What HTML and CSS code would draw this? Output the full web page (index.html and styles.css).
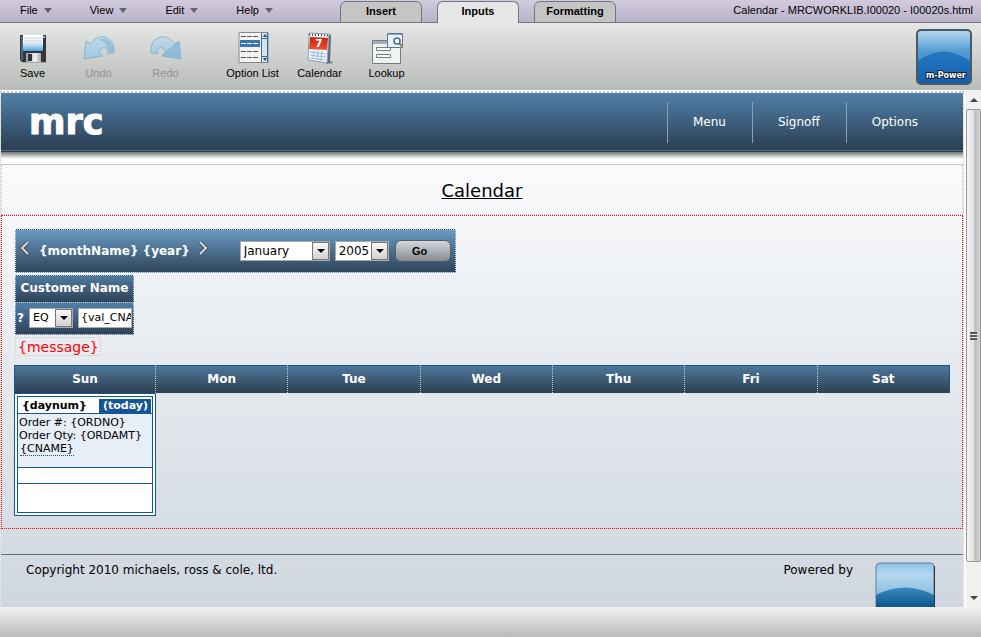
FILE: index.html
```html
<!DOCTYPE html>
<html lang="en">
<head>
    <meta charset="UTF-8">
    <meta name="viewport" content="width=device-width, initial-scale=1.0">
    <title>Calendar - MRCWORKLIB.I00020 - I00020s.html</title>
    <link rel="stylesheet" href="styles.css">
</head>
<body>
    <!-- Menu bar with tabs -->
    <header class="menubar">
        <nav class="menus">
            <button type="button" class="menu">File</button>
            <button type="button" class="menu">View</button>
            <button type="button" class="menu">Edit</button>
            <button type="button" class="menu">Help</button>
        </nav>
        <div class="tabs">
            <button type="button" class="tab">Insert</button>
            <button type="button" class="tab active">Inputs</button>
            <button type="button" class="tab">Formatting</button>
        </div>
        <span class="file-name">Calendar - MRCWORKLIB.I00020 - I00020s.html</span>
    </header>

    <!-- Toolbar -->
    <div class="toolbar">
        <div class="tools">
            <button type="button" class="tool save">
                <svg width="32" height="32" viewBox="0 0 32 32">
                    <defs>
                        <linearGradient id="disk" x1="0" y1="0" x2="0" y2="1"><stop offset="0" stop-color="#fff"/><stop offset=".5" stop-color="#e8f4fd"/><stop offset="1" stop-color="#4aa3e0"/></linearGradient>
                        <linearGradient id="metal" x1="0" y1="0" x2="1" y2="0"><stop offset="0" stop-color="#999"/><stop offset=".6" stop-color="#f4f4f4"/><stop offset="1" stop-color="#aaa"/></linearGradient>
                    </defs>
                    <path d="M5 30h25v1H5z" fill="#888" opacity=".5"/>
                    <path d="M3 3h26v27H5l-2-2z" fill="#34363f"/>
                    <path d="M4 4h2v24H4z" fill="#5c6070"/>
                    <path d="M6 3h20v16H6z" fill="url(#disk)"/>
                    <path d="M7 6h18M7 9h18M7 12h18" stroke="#c5d3df"/>
                    <path d="M9 21h15v9H9z" fill="url(#metal)"/>
                    <path d="M11 22h4v7h-4z" fill="#30323a"/>
                    <path d="M26 4h2v2h-2z" fill="#aab"/>
                </svg>
                <span>Save</span>
            </button>
            <button type="button" class="tool" disabled>
                <svg width="34" height="32" viewBox="0 0 34 32">
                    <defs><linearGradient id="arrow" x1="0" y1="0" x2="0" y2="1"><stop offset="0" stop-color="#c3dae7"/><stop offset="1" stop-color="#9cc8e4"/></linearGradient></defs>
                    <path d="M2 27L4 9l4 3C12 7 17 4 22 5c7 1 11 8 10 16l-6 1c0-8-5-8-9-3l4 5z" fill="url(#arrow)" stroke="#8fb4ca"/>
                    <path d="M15 8c7 0 11 5 12 13l5-1c0-9-7-16-17-12z" fill="#7eb2d4" opacity=".6"/>
                </svg>
                <span>Undo</span>
            </button>
            <button type="button" class="tool" disabled>
                <svg width="34" height="32" viewBox="0 0 34 32">
                    <g transform="matrix(-1 0 0 1 34 0)">
                        <path d="M2 27L4 9l4 3C12 7 17 4 22 5c7 1 11 8 10 16l-6 1c0-8-5-8-9-3l4 5z" fill="url(#arrow)" stroke="#8fb4ca"/>
                        <path d="M2 27L4 9l4 3c4 4 6 4 9 7l4 5z" fill="#7eb2d4" opacity=".6"/>
                    </g>
                </svg>
                <span>Redo</span>
            </button>
        </div>
        <div class="tools">
            <button type="button" class="tool">
                <svg width="32" height="32" viewBox="0 0 32 32">
                    <path d="M2 .5h29v30H2z" fill="#f4f4f2" stroke="#85888a"/>
                    <path d="M3 8h20v7H3z" fill="#3b76b0"/>
                    <path d="M4 4.500h18M4 19.500h18M4 25.500h18" stroke="#555" stroke-dasharray="5 1"/>
                    <path d="M4 11.500h18" stroke="#fff" stroke-dasharray="5 1"/>
                    <path d="M24.500 1v29" stroke="#496b8c"/>
                    <path d="M25 1h6v29h-6z" fill="#d3e4f1"/>
                    <path d="M25 6.500h6M25 24.500h6M30.500 1v29" stroke="#3f6890"/>
                    <path d="M28 2l2 3h-4zM28 29l2-3h-4z" fill="#244b72"/>
                </svg>
                <span>Option List</span>
            </button>
            <button type="button" class="tool">
                <svg width="32" height="32" viewBox="0 0 32 32">
                    <defs><linearGradient id="red" x1="0" y1="0" x2="0" y2="1"><stop offset="0" stop-color="#c9210c"/><stop offset="1" stop-color="#ee5330"/></linearGradient></defs>
                    <path d="M9 29l19 3 1-3z" fill="#777" opacity=".6"/>
                    <path d="M24 2l3 1-1 28-4 1z" fill="#566b80"/>
                    <path d="M5 1l20 1-2 29-19-3z" fill="#eef4fa" stroke="#90a0af"/>
                    <path d="M6 5l18 1-1 12L5 17z" fill="url(#red)"/>
                    <path d="M6 20l16 2M6 23l16 2M6 26l15 2M10 18l-1 9M14 18l-1 10M18 19l-1 10" stroke="#9bbad8"/>
                    <path d="M5 2.500l20 1" stroke="#444" stroke-width="2" stroke-dasharray="1 2"/>
                    <text x="11" y="15" class="day">7</text>
                </svg>
                <span>Calendar</span>
            </button>
            <button type="button" class="tool">
                <svg width="32" height="32" viewBox="0 0 32 32">
                    <path d="M1.500 8.500h28v23h-28z" fill="#f1f2f2" stroke="#747d83"/>
                    <path d="M2 9h27v3H2z" fill="#9fb0bc"/>
                    <path d="M5.500 15.500h14v3h-14zM5.500 22.500h14v3h-14z" fill="#fff" stroke="#747d83"/>
                    <path d="M16.500 1.500h15v14h-15z" fill="#e8f1f7" stroke="#5d7c90"/>
                    <path d="M17 2h14v1H17z" fill="#8ba7ba"/>
                    <path d="M29 2h2v1h-2z" fill="#e55"/>
                    <path d="M28 11l4 4" stroke="#a2744d" stroke-width="2"/>
                    <circle cx="26" cy="9" r="3" fill="#fff" stroke="#446f91" stroke-width="1.500"/>
                </svg>
                <span>Lookup</span>
            </button>
        </div>
        <svg class="mpower" width="57" height="57" viewBox="0 0 57 57">
            <defs>
                <linearGradient id="glass" x1="0" y1="0" x2="0" y2="1"><stop offset="0" stop-color="#b9daf2"/><stop offset=".4" stop-color="#529bd3"/><stop offset="1" stop-color="#2878c2"/></linearGradient>
                <linearGradient id="hill" x1="0" y1="0" x2="0" y2="1"><stop offset="0" stop-color="#2378c0"/><stop offset="1" stop-color="#155fb0"/></linearGradient>
            </defs>
            <rect x="2" y="1" width="54" height="54" rx="4" fill="url(#glass)" stroke="#4c5862" stroke-width="2"/>
            <path d="M3 32Q28 13 55 32V51q0 3-3 3H6q-3 0-3-3z" fill="url(#hill)"/>
            <text x="11" y="49" class="mpower-text">m-Power</text>
        </svg>
    </div>

    <!-- Page being edited -->
    <main class="workspace">
        <div class="page">
            <div class="banner">
                <h1 class="logo">mrc</h1>
                <nav class="links">
                    <a href="#">Menu</a>
                    <a href="#">Signoff</a>
                    <a href="#">Options</a>
                </nav>
            </div>
            <div class="banner-shadow"></div>
            <div class="content">
                <h2 class="title">Calendar</h2>
                <section class="region">
                    <form class="month-bar">
                        <button type="button" class="step" aria-label="Previous month">
                            <svg width="10" height="16" viewBox="0 0 10 16"><path d="M8 2L2 8l6 6" fill="none" stroke="#444e58" stroke-width="4"/><path d="M8 2L2 8l6 6" fill="none" stroke="#d9dbdd" stroke-width="2"/></svg>
                        </button>
                        <strong class="month-name">{monthName} {year}</strong>
                        <button type="button" class="step" aria-label="Next month">
                            <svg width="10" height="16" viewBox="0 0 10 16"><path d="M2 2l6 6-6 6" fill="none" stroke="#444e58" stroke-width="4"/><path d="M2 2l6 6-6 6" fill="none" stroke="#d9dbdd" stroke-width="2"/></svg>
                        </button>
                        <span class="drop month">
                            <select aria-label="Month"><option>January</option></select>
                            <i class="drop-arrow"></i>
                        </span>
                        <span class="drop year">
                            <select aria-label="Year"><option>2005</option></select>
                            <i class="drop-arrow"></i>
                        </span>
                        <button type="button" class="go">Go</button>
                    </form>
                    <form class="filter">
                        <label class="filter-name" for="cname">Customer Name</label>
                        <div class="filter-row">
                            <b>?</b>
                            <span class="drop operator">
                                <select aria-label="Operator"><option>EQ</option></select>
                                <i class="drop-arrow"></i>
                            </span>
                            <input type="text" id="cname" class="value" value="{val_CNAME}">
                        </div>
                    </form>
                    <div class="message">{message}</div>
                    <table class="calendar">
                        <thead>
                            <tr><th class="first">Sun</th><th>Mon</th><th>Tue</th><th>Wed</th><th>Thu</th><th>Fri</th><th>Sat</th></tr>
                        </thead>
                        <tbody>
                            <tr>
                                <td class="day-cell">
                                    <div class="day-box">
                                        <div class="day-head"><b>{daynum}</b><b class="today">(today)</b></div>
                                        <div class="order">
                                            Order #: {ORDNO}<br>
                                            Order Qty: {ORDAMT}<br>
                                            <a href="#">{CNAME}</a>
                                        </div>
                                        <div class="blank"></div>
                                        <div class="blank tall"></div>
                                    </div>
                                </td>
                                <td></td><td></td><td></td><td></td><td></td><td></td>
                            </tr>
                        </tbody>
                    </table>
                </section>
                <footer class="footer">
                    <span>Copyright 2010 michaels, ross &amp; cole, ltd.</span>
                    <span class="powered">Powered by</span>
                    <svg width="60" height="60" viewBox="0 0 60 60">
                        <defs>
                            <linearGradient id="sky" x1="0" y1="0" x2="0" y2="1"><stop offset="0" stop-color="#8bc3e6"/><stop offset=".2" stop-color="#b4d8ee"/><stop offset="1" stop-color="#5a9fce"/></linearGradient>
                            <linearGradient id="sea" x1="0" y1="0" x2="0" y2="1"><stop offset="0" stop-color="#3d8abc"/><stop offset=".6" stop-color="#06568f"/></linearGradient>
                        </defs>
                        <rect x="1" y="1" width="58" height="58" rx="4" fill="url(#sky)" stroke="#5a7f98"/>
                        <path d="M1 33Q30 18 59 33V59H1z" fill="url(#sea)"/>
                        <path d="M59.500 4v56" stroke="#333"/>
                    </svg>
                </footer>
            </div>
        </div>
        <div class="scrollbar">
            <button type="button" class="scroll-up" aria-label="Scroll up"></button>
            <div class="thumb"><i></i></div>
            <button type="button" class="scroll-down" aria-label="Scroll down"></button>
        </div>
    </main>
    <div class="statusbar"></div>
</body>
</html>
```

FILE: styles.css
```css
* {
    box-sizing: border-box;
}
body {
    margin: 0;
    height: 100vh;
    display: flex;
    flex-direction: column;
    overflow: hidden;
    font-family: Verdana, "DejaVu Sans", sans-serif;
    font-size: 12px;
    color: #000;
}
button {
    margin: 0;
    padding: 0;
    border: none;
    background: none;
    font-family: Arial, "Liberation Sans", sans-serif;
    font-size: 11px;
    color: #000;
}
svg {
    display: block;
}

/* Menu bar */
.menubar {
    display: flex;
    height: 23px;
    flex-shrink: 0;
    padding: 0 8px 0 20px;
    background: linear-gradient(#d2cbde, #b9b2c8);
    box-shadow: inset 0 -1px #77757c;
    font-family: Arial, "Liberation Sans", sans-serif;
    font-size: 11px;
}
.menus {
    display: flex;
    gap: 38px;
    height: 20px;
}
.menu {
    display: flex;
    align-items: center;
    gap: 6px;
}
.menu::after {
    content: "";
    border: 4px solid transparent;
    border-top: 5px solid #66636d;
    border-bottom: none;
}
.tabs {
    display: flex;
    gap: 15px;
    margin-left: 67px;
    padding-top: 1px;
}
.tab {
    width: 82px;
    padding-bottom: 3px;
    border: 1px solid #77757c;
    border-radius: 6px 6px 0 0;
    background: #c6c5c5;
    font-weight: bold;
}
.tab.active {
    border-bottom: none;
    background: #e5e7e6;
    padding-bottom: 4px;
}
.file-name {
    margin-left: auto;
    line-height: 20px;
}

/* Toolbar */
.toolbar {
    display: flex;
    height: 67px;
    flex-shrink: 0;
    gap: 20px;
    padding-right: 9px;
    background: linear-gradient(#e5e7e6, #b9bbb8);
}
.tools {
    display: flex;
}
.tool {
    display: flex;
    flex-direction: column;
    align-items: center;
    gap: 3px;
    width: 67px;
    padding-top: 9px;
    line-height: 13px;
    white-space: nowrap;
}
.tool.save {
    width: 65px;
}
.tool:disabled {
    color: #909390;
}
.day {
    font: bold 11px Verdana, "DejaVu Sans", sans-serif;
    fill: #fff;
}
.mpower {
    margin: 6px 0 0 auto;
}
.mpower-text {
    font: bold 8px Verdana, "DejaVu Sans", sans-serif;
    fill: #fff;
    stroke: #123;
    stroke-width: 2px;
    paint-order: stroke;
}

/* Workspace */
.workspace {
    display: flex;
    flex: 1;
    min-height: 0;
    overflow: hidden;
    background: #fff;
}
.page {
    display: flex;
    flex-direction: column;
    flex: 1;
    margin: 1px 2px 0 0;
    border: 1px dotted #c8c8c8;
    border-top-width: 2px;
    border-bottom: none;
    overflow: hidden;
}
.banner {
    display: flex;
    justify-content: space-between;
    align-items: center;
    height: 59px;
    flex-shrink: 0;
    padding: 0 19px 0 28px;
    border-bottom: 1px solid #253b4e;
    background: linear-gradient(#507fa8, #2a3e52);
    box-shadow: inset 0 -1px #587389;
}
.logo {
    margin: 0;
    font-size: 35px;
    line-height: 40px;
    color: #fff;
    -webkit-text-stroke: 1px #fff;
}
.links {
    display: flex;
}
.links a {
    padding: 0 26px 0 25px;
    border-left: 1px solid #8fa0af;
    line-height: 41px;
    color: #fff;
    text-decoration: none;
}
.banner-shadow {
    height: 12px;
    flex-shrink: 0;
    background: linear-gradient(#777, #fff 7px);
}
.content {
    flex: 1;
    border-top: 1px dotted #bbb;
    background: linear-gradient(#fafbfc, #cdd5de);
}
.title {
    margin: 0;
    height: 50px;
    border: 1px dotted #ccc;
    border-top: none;
    font-size: 18px;
    font-weight: normal;
    line-height: 51px;
    text-align: center;
    text-decoration: underline;
}
.region {
    padding: 13px 12px 12px;
    border: 1px dotted #f00;
}

/* Month selector */
.month-bar {
    display: flex;
    align-items: center;
    width: 441px;
    height: 44px;
    margin-left: 1px;
    padding: 0 4px;
    border: 1px dotted #d5e0ea;
    background: linear-gradient(#6a9bc6, #2e4458);
    color: #fff;
}
.step {
    padding-bottom: 6px;
}
.month-name {
    margin: 0 8px 0 9px;
}
.drop {
    position: relative;
    display: flex;
    height: 20px;
}
.drop select {
    appearance: none;
    width: 100%;
    padding: 0 3px;
    border: 1px solid #aaa;
    border-radius: 0;
    background: #fff;
    color: #000;
    font: 12px Verdana, "DejaVu Sans", sans-serif;
}
.drop-arrow {
    position: absolute;
    top: 1px;
    right: 1px;
    bottom: 1px;
    width: 17px;
    border: 1px solid #777;
    background: linear-gradient(#f7f7f7, #d2d2d2);
    pointer-events: none;
}
.drop-arrow::after {
    content: "";
    position: absolute;
    top: 6px;
    left: 4px;
    border: 4px solid transparent;
    border-top-color: #000;
    border-bottom: none;
}
.month {
    width: 90px;
    margin-left: 32px;
}
.year {
    width: 54px;
    margin: 0 6px 0 5px;
}
.go {
    width: 56px;
    height: 22px;
    padding-right: 6px;
    border: 1px solid #555e68;
    border-radius: 6px;
    background: linear-gradient(#d5d7da, #858b95);
    font-weight: bold;
}

/* Customer filter */
.filter {
    width: 119px;
    margin: 2px 0 0 1px;
    color: #fff;
}
.filter-name {
    display: block;
    height: 28px;
    border: 1px dotted #c5d2de;
    background: linear-gradient(#507a9e, #2e4256);
    font-weight: bold;
    line-height: 24px;
    text-align: center;
}
.filter-row {
    display: flex;
    align-items: center;
    gap: 5px;
    height: 32px;
    padding: 0 1px 2px;
    border: 1px dotted #c5d2de;
    border-top: none;
    background: linear-gradient(#507fa8, #2e4256);
}
.filter-row b {
    width: 7px;
}
.operator {
    width: 44px;
    flex-shrink: 0;
}
.operator select {
    font-size: 11px;
}
.value {
    flex: 1;
    min-width: 0;
    height: 20px;
    padding: 0 0 0 2px;
    border: 1px solid #aaa;
    font: 11px Verdana, "DejaVu Sans", sans-serif;
}
.message {
    width: fit-content;
    margin: 2px 0 9px 1px;
    padding: 1px 1px 0 2px;
    border: 1px dotted #ccc;
    font-size: 14px;
    line-height: 16px;
    color: #f00;
}

/* Calendar grid */
.calendar {
    width: 100%;
    table-layout: fixed;
    border-spacing: 0;
}
.calendar thead {
    background: linear-gradient(#507a9c, #2c3f51);
}
.calendar th {
    height: 28px;
    padding: 0 0 2px;
    border-top: 1px solid #145593;
    border-right: 1px dotted #c0ccd6;
    color: #fff;
}
.calendar th:last-child {
    border-right: 1px solid #145593;
}
.calendar .first {
    width: 142px;
    border-left: 1px solid #145593;
}
.calendar td {
    padding: 0;
}
.calendar .day-cell {
    padding: 2px;
    border: 1px solid #145593;
    background: #fff;
}
.day-box {
    border: 1px solid #145593;
    font-size: 11px;
}
.day-head {
    display: flex;
    justify-content: space-between;
    height: 17px;
    padding: 2px 1px 0 4px;
    border-bottom: 1px solid #145593;
    line-height: 13px;
}
.today {
    padding: 0 3px 0 4px;
    background: #145593;
    color: #fff;
}
.order {
    height: 53px;
    padding: 2px 1px;
    background: #e8eef8;
    line-height: 13px;
}
.order a {
    display: inline-block;
    margin-left: 1px;
    border-bottom: 1px dotted #145593;
    color: #000;
    text-decoration: none;
}
.blank {
    height: 16px;
    border-top: 1px solid #145593;
}
.blank.tall {
    height: 29px;
}

/* Footer */
.footer {
    display: flex;
    margin-top: 25px;
    padding: 7px 28px 0 25px;
    border-top: 1px solid #6a6d70;
    line-height: 16px;
}
.powered {
    margin: 0 22px 0 auto;
}

/* Scrollbar */
.scrollbar {
    display: flex;
    flex-direction: column;
    width: 15px;
    background: #f0f0f0;
}
.scroll-up,
.scroll-down {
    display: flex;
    align-items: center;
    justify-content: center;
    height: 19px;
}
.scroll-down {
    margin-top: 26px;
}
.scroll-up::after,
.scroll-down::after {
    content: "";
    border: 4px solid transparent;
}
.scroll-up::after {
    border-top: none;
    border-bottom-color: #444;
}
.scroll-down::after {
    border-bottom: none;
    border-top-color: #444;
}
.thumb {
    display: flex;
    align-items: center;
    justify-content: center;
    flex: 1;
    border: 1px solid #979797;
    border-radius: 2px;
    background: linear-gradient(to right, #f5f5f5, #e2e2e4 50%, #bdbdc2 60%, #d5d5d8);
}
.thumb i {
    width: 7px;
    height: 8px;
    background: repeating-linear-gradient(#555 0 2px, #eee 2px 3px);
}
.statusbar {
    height: 30px;
    flex-shrink: 0;
    background: linear-gradient(#f2f3f2, #b9bbb8);
}
```
